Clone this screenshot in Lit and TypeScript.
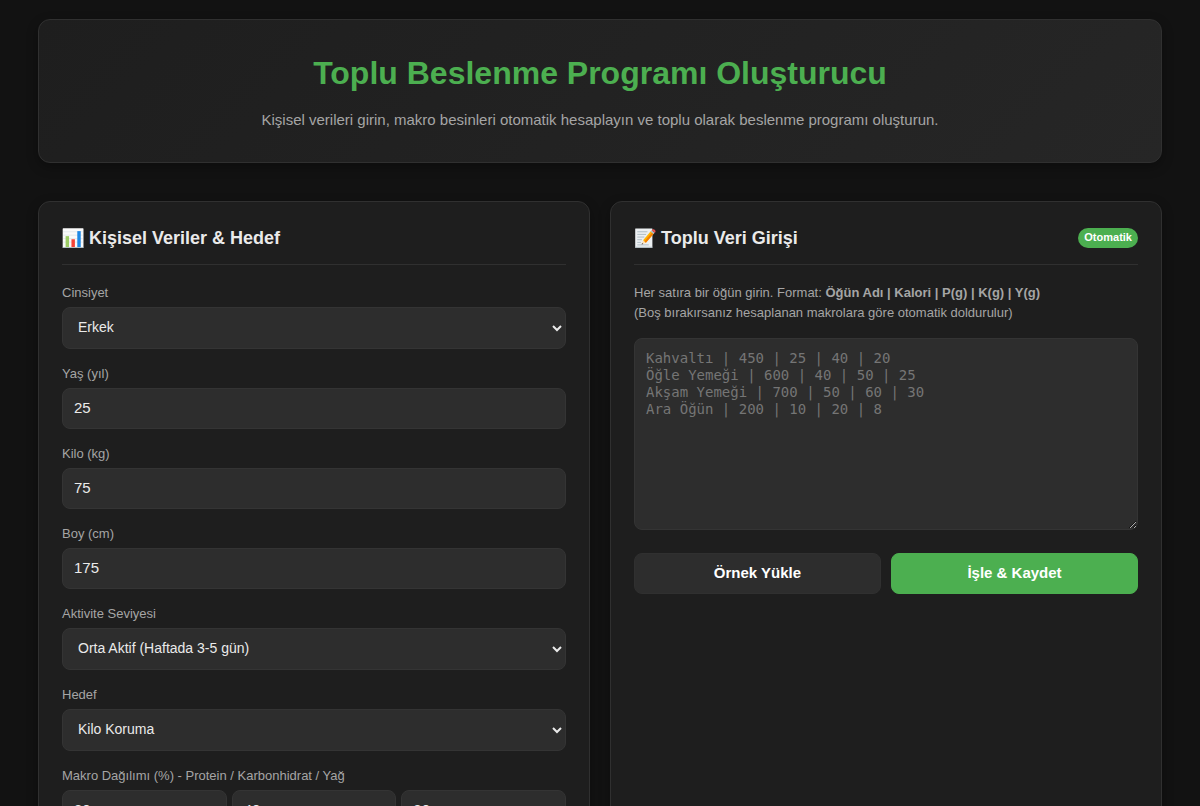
import { LitElement, html, css, svg } from "lit";
import { customElement } from "lit/decorators.js";

const chartIcon = svg`
  <rect x="4" y="1" width="121" height="126" rx="3" fill="#fafafa"/>
  <path d="M7 24H121M7 46H121M7 68H121M7 90H121" stroke="#cfd8dc" stroke-width="3"/>
  <rect x="21" y="52" width="20" height="71" fill="#9ccc65"/>
  <rect x="55" y="72" width="20" height="51" fill="#f44336"/>
  <rect x="89" y="20" width="20" height="103" fill="#1e88e5"/>
  <rect x="4" y="122" width="121" height="5" fill="#b0bec5"/>`;

const memoIcon = svg`
  <rect x="7" y="3" width="100" height="123" rx="2" fill="#eceff1"/>
  <path d="M7 120H107V126H7Z" fill="#b0bec5"/>
  <path d="M19 24H78M19 41H70M19 58H60M19 75H46M19 92H40M19 108H86" stroke="#90a4ae" stroke-width="4"/>
  <path d="M44 106L53 79L69 94Z" fill="#ffe0b2"/>
  <path d="M44 106L47 96L54 103Z" fill="#424242"/>
  <path d="M53 79L100 18L117 34L69 94Z" fill="#ffb300"/>
  <path d="M61 86L108 26L117 34L69 94Z" fill="#f57c00"/>
  <path d="M96 23L103 14L121 30L113 39Z" fill="#b0bec5"/>
  <path d="M103 14Q109 4 118 9Q128 17 125 25L121 30Z" fill="#ef5350"/>`;

const mealPlaceholder = [
  "Kahvaltı | 450 | 25 | 40 | 20",
  "Öğle Yemeği | 600 | 40 | 50 | 25",
  "Akşam Yemeği | 700 | 50 | 60 | 30",
  "Ara Öğün | 200 | 10 | 20 | 8",
].join("\n");

@customElement("app-root")
export class AppRoot extends LitElement {
  static styles = css`
    :host {
      display: block;
      box-sizing: border-box;
      height: 100vh;
      overflow: hidden;
      padding: 19px 38px;
      background: #121212;
      color: #eaeaea;
      font-family: "Liberation Sans", Arial, sans-serif;
      font-size: 15px;
    }
    * { box-sizing: border-box; }
    .hero {
      padding: 32px 24px;
      margin-bottom: 38px;
      text-align: center;
      background: linear-gradient(135deg, #1e1e1e, #262626);
      border: 1px solid #303030;
      border-radius: 12px;
      box-shadow: 0 4px 12px rgba(0, 0, 0, 0.3);
    }
    h1 {
      margin: 0 0 16px;
      font-size: 32px;
      line-height: 42px;
      color: #4caf50;
    }
    .hero p {
      margin: 0;
      line-height: 20px;
      color: #a5a5a5;
    }
    .grid {
      display: grid;
      grid-template-columns: repeat(2, minmax(0, 1fr));
      gap: 20px;
    }
    .card {
      padding: 23px;
      background: #1e1e1e;
      border: 1px solid #303030;
      border-radius: 12px;
      box-shadow: 0 4px 12px rgba(0, 0, 0, 0.3);
    }
    .head {
      display: flex;
      align-items: center;
      justify-content: space-between;
      height: 40px;
      padding-bottom: 14px;
      margin-bottom: 18px;
      border-bottom: 1px solid #303030;
    }
    h2 {
      display: flex;
      align-items: center;
      gap: 5px;
      margin: 0;
      font-size: 18px;
      line-height: 24px;
    }
    .icon {
      width: 22px;
      height: 20px;
    }
    .badge {
      padding: 0 6px 2px;
      border-radius: 10px;
      background: #4caf50;
      color: #fff;
      font-size: 11px;
      font-weight: bold;
      line-height: 18px;
    }
    .field { margin-bottom: 15px; }
    .label {
      display: block;
      margin-bottom: 5px;
      font-size: 13px;
      line-height: 19px;
      color: #a5a5a5;
    }
    .control {
      display: block;
      width: 100%;
      height: 41px;
      padding: 0 11px 2px;
      background: #2d2d2d;
      border: 1px solid #343434;
      border-radius: 8px;
      color: #eaeaea;
      font: inherit;
    }
    select.control {
      height: 42px;
      font-size: 14px;
    }
    .macros {
      display: grid;
      grid-template-columns: repeat(3, minmax(0, 1fr));
      gap: 5px;
    }
    .hint {
      margin: 0 0 15px;
      font-size: 13px;
      line-height: 20px;
      color: #a5a5a5;
    }
    textarea.control {
      height: 192px;
      padding: 11px;
      font-family: "DejaVu Sans Mono", monospace;
      font-size: 14px;
      line-height: 17px;
      resize: vertical;
    }
    textarea::placeholder { color: #757575; }
    .actions {
      display: grid;
      grid-template-columns: 1fr 1fr;
      gap: 10px;
      margin-top: 23px;
    }
    button {
      height: 41px;
      padding: 0 16px 2px;
      border: 1px solid #4caf50;
      border-radius: 8px;
      background: #4caf50;
      color: #fff;
      font: bold 15px "Liberation Sans", Arial, sans-serif;
    }
    .secondary {
      background: #2d2d2d;
      border-color: #303030;
    }
  `;

  private number(id: string, label: string, value: number) {
    return html`<div class="field">
      <label class="label" for=${id}>${label}</label>
      <input class="control" id=${id} type="number" .value=${String(value)} />
    </div>`;
  }

  private select(id: string, label: string, option: string) {
    return html`<div class="field">
      <label class="label" for=${id}>${label}</label>
      <select class="control" id=${id}><option>${option}</option></select>
    </div>`;
  }

  render() {
    return html`
      <header class="hero">
        <h1>Toplu Beslenme Programı Oluşturucu</h1>
        <p>Kişisel verileri girin, makro besinleri otomatik hesaplayın ve toplu olarak beslenme programı oluşturun.</p>
      </header>
      <main class="grid">
        <section class="card">
          <div class="head">
            <h2><svg class="icon" viewBox="0 0 128 128" preserveAspectRatio="none" aria-hidden="true">${chartIcon}</svg>Kişisel Veriler &amp; Hedef</h2>
          </div>
          ${this.select("gender", "Cinsiyet", "Erkek")}
          ${this.number("age", "Yaş (yıl)", 25)}
          ${this.number("weight", "Kilo (kg)", 75)}
          ${this.number("height", "Boy (cm)", 175)}
          ${this.select("activity", "Aktivite Seviyesi", "Orta Aktif (Haftada 3-5 gün)")}
          ${this.select("goal", "Hedef", "Kilo Koruma")}
          <div class="field">
            <label class="label" for="protein">Makro Dağılımı (%) - Protein / Karbonhidrat / Yağ</label>
            <div class="macros">
              <input class="control" id="protein" type="number" value="30" />
              <input class="control" type="number" value="40" aria-label="Karbonhidrat" />
              <input class="control" type="number" value="30" aria-label="Yağ" />
            </div>
          </div>
        </section>
        <section class="card">
          <div class="head">
            <h2><svg class="icon" viewBox="0 0 128 128" preserveAspectRatio="none" aria-hidden="true">${memoIcon}</svg>Toplu Veri Girişi</h2>
            <span class="badge">Otomatik</span>
          </div>
          <label class="label hint" for="meals">Her satıra bir öğün girin. Format: <b>Öğün Adı | Kalori | P(g) | K(g) | Y(g)</b><br />(Boş bırakırsanız hesaplanan makrolara göre otomatik doldurulur)</label>
          <textarea class="control" id="meals" placeholder=${mealPlaceholder}></textarea>
          <div class="actions">
            <button class="secondary" type="button">Örnek Yükle</button>
            <button type="button">İşle &amp; Kaydet</button>
          </div>
        </section>
      </main>
    `;
  }
}
